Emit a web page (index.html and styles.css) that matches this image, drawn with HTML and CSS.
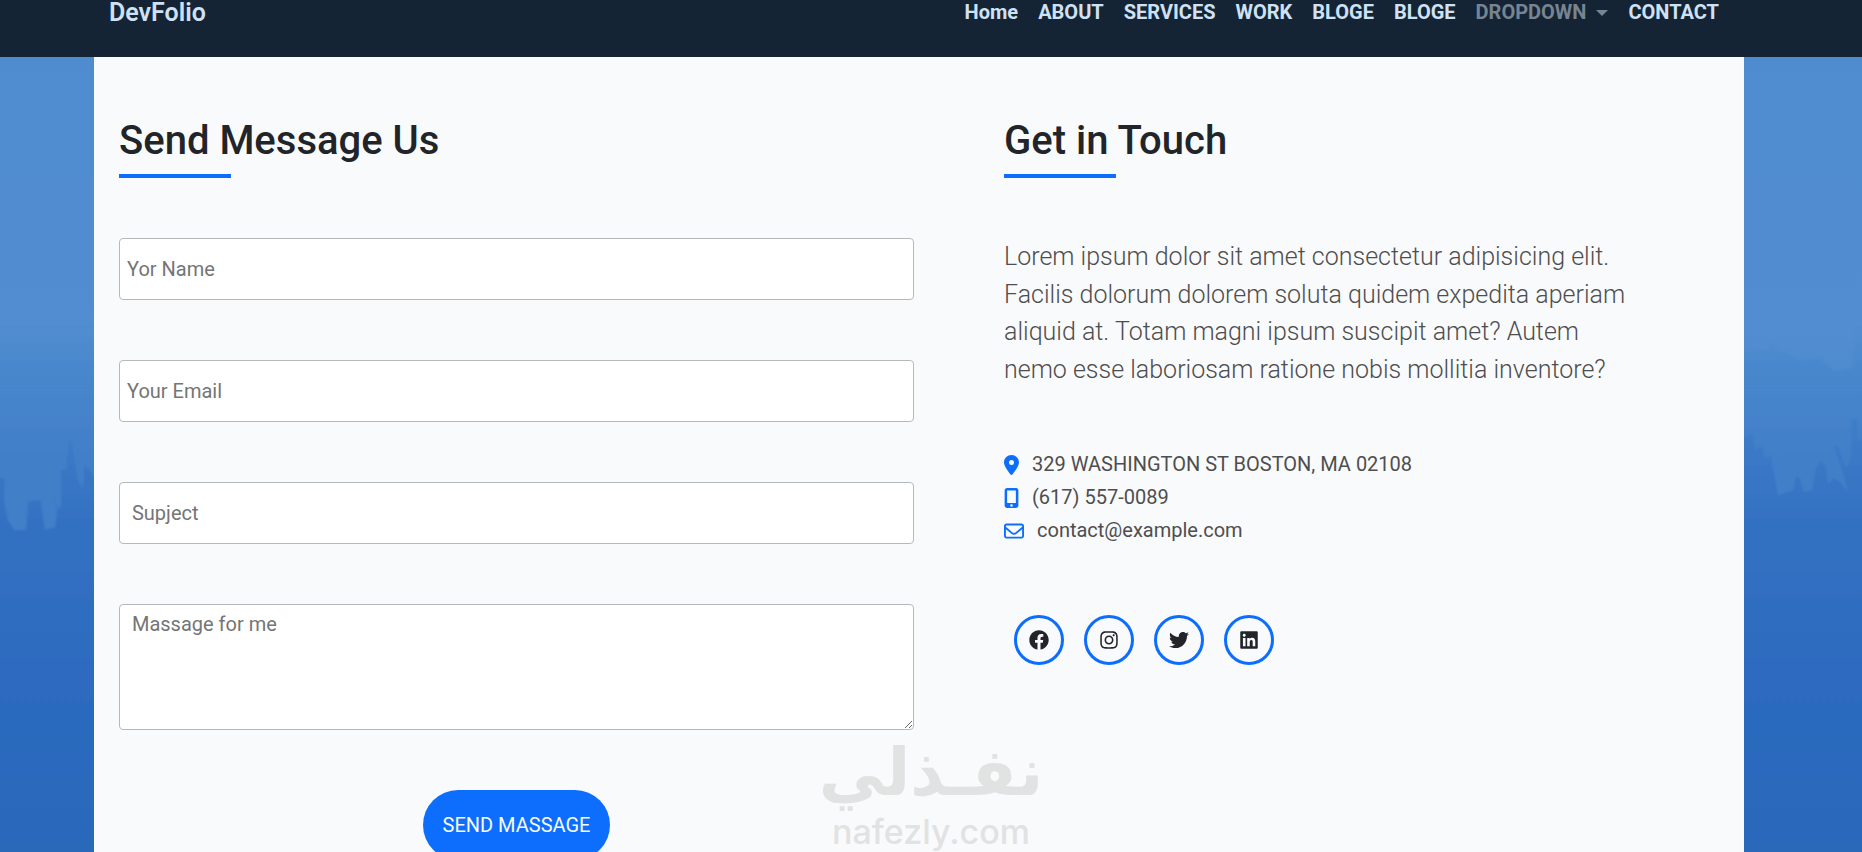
FILE: index.html
```html
<!DOCTYPE html>
<html lang="en">
<head>
<meta charset="utf-8">
<meta name="viewport" content="width=device-width, initial-scale=1">
<title>DevFolio</title>
<link rel="stylesheet" href="styles.css">
</head>
<body>
<header class="navbar">
  <a class="brand" href="#">DevFolio</a>
  <nav class="nav">
    <a href="#home">Home</a>
    <a href="#about">ABOUT</a>
    <a href="#services">SERVICES</a>
    <a href="#work">WORK</a>
    <a href="#bloge">BLOGE</a>
    <a href="#bloge">BLOGE</a>
    <a class="dropdown" href="#more">DROPDOWN</a>
    <a href="#contact">CONTACT</a>
  </nav>
</header>
<main class="contact">
  <svg class="scenery" viewBox="0 0 1862 795" preserveAspectRatio="none" aria-hidden="true">
    <defs>
      <linearGradient id="fog" gradientUnits="userSpaceOnUse" x1="0" y1="270" x2="0" y2="400">
        <stop offset="0" stop-color="#4685cb" stop-opacity="0"/>
        <stop offset=".5" stop-color="#4685cb"/>
        <stop offset="1" stop-color="#427fc9"/>
      </linearGradient>
      <linearGradient id="wood" gradientUnits="userSpaceOnUse" x1="0" y1="370" x2="0" y2="795">
        <stop offset="0" stop-color="#3e7cc7"/>
        <stop offset=".25" stop-color="#3270c2"/>
        <stop offset=".6" stop-color="#2d6bbf"/>
        <stop offset="1" stop-color="#2b68ba"/>
      </linearGradient>
      <filter id="soft"><feGaussianBlur stdDeviation="1"/></filter>
    </defs>
    <g filter="url(#soft)">
      <path fill="url(#fog)" d="M-9 250H120V500H-9zM1730 296l40-3 3-8 4 8 23 10 20-2 15 14 17-4 4-43 6-9 9 0V500H1730z"/>
      <path fill="url(#wood)" d="M-9 421H5L4 443 8 463 14 473 26 473 28 445 35 443 41 444 45 473 55 470 57 455 52 435 58 453 61 448 61 411 66 413 69 383 72 386 78 423 83 433 84 408 90 413 100 430V810H-9zM1735 383l18-6 3 16 6-5 3 13 6-2 7 39 4-1 11-4 3-14 4 2 4 14 8-2 4-22 5-8 5 6 2 18 6-6 6 4 8 10-6-22-8-23 4-1 8 22 5-10 1-38 4-2 2 22 14-4V810H1735z"/>
    </g>
  </svg>
  <section class="card">
    <form class="form">
      <h2 class="title">Send Message Us</h2>
      <input class="field" type="text" aria-label="Name" placeholder="Yor Name">
      <input class="field" type="email" aria-label="Email" placeholder="Your Email">
      <input class="field" type="text" aria-label="Subject" placeholder="&nbsp;Supject">
      <textarea class="field area" aria-label="Message" placeholder="&nbsp;Massage for me"></textarea>
      <button class="send" type="button">SEND MASSAGE</button>
    </form>
    <div class="info">
      <h2 class="title">Get in Touch</h2>
      <p class="lead">Lorem ipsum dolor sit amet consectetur adipisicing elit. Facilis dolorum dolorem soluta quidem expedita aperiam aliquid at. Totam magni ipsum suscipit amet? Autem nemo esse laboriosam ratione nobis mollitia inventore?</p>
      <ul class="details">
        <li><svg width="15" height="20" viewBox="0 0 384 512" aria-hidden="true"><path d="M215.700 499.200C267 435 384 279.400 384 192C384 86 298 0 192 0S0 86 0 192c0 87.400 117 243 168.300 307.200c12.300 15.300 35.100 15.300 47.400 0zM192 256a64 64 0 1 1 0-128 64 64 0 1 1 0 128z"/></svg>329 WASHINGTON ST BOSTON, MA 02108</li>
        <li><svg width="15" height="20" viewBox="0 0 384 512" aria-hidden="true"><path d="M16 64C16 28.700 44.700 0 80 0H304c35.300 0 64 28.700 64 64V448c0 35.300-28.700 64-64 64H80c-35.300 0-64-28.700-64-64V64zM224 448a32 32 0 1 0-64 0 32 32 0 1 0 64 0zM304 64H80V384H304V64z"/></svg>(617) 557-0089</li>
        <li><svg width="20" height="20" viewBox="0 0 512 512" aria-hidden="true"><path d="M64 112c-8.800 0-16 7.200-16 16v22.100L220.500 291.700c20.700 17 50.400 17 71.100 0L464 150.100V128c0-8.800-7.200-16-16-16H64zM48 212.200V384c0 8.800 7.200 16 16 16H448c8.800 0 16-7.200 16-16V212.200L322 328.800c-38.400 31.500-93.700 31.500-132 0L48 212.200zM0 128C0 92.700 28.700 64 64 64H448c35.300 0 64 28.700 64 64V384c0 35.300-28.700 64-64 64H64c-35.300 0-64-28.700-64-64V128z"/></svg>contact@example.com</li>
      </ul>
      <div class="social">
        <a href="#facebook" aria-label="Facebook"><svg width="20" height="20" viewBox="0 0 512 512"><path d="M504 256C504 119 393 8 256 8S8 119 8 256c0 123.780 90.690 226.380 209.250 245V327.690h-63V256h63v-54.640c0-62.150 37-96.480 93.670-96.480 27.140 0 55.520 4.840 55.520 4.840v61h-31.280c-30.800 0-40.410 19.120-40.410 38.730V256h68.780l-11 71.690h-57.780V501C413.310 482.380 504 379.780 504 256z"/></svg></a>
        <a href="#instagram" aria-label="Instagram"><svg width="18" height="20" viewBox="0 0 448 512"><path d="M224.100 141c-63.600 0-114.900 51.300-114.900 114.900s51.300 114.900 114.900 114.900S339 319.500 339 255.900 287.700 141 224.100 141zm0 189.600c-41.100 0-74.700-33.500-74.700-74.700s33.500-74.700 74.700-74.700 74.700 33.500 74.700 74.700-33.600 74.700-74.700 74.700zm146.400-194.300c0 14.900-12 26.800-26.800 26.800-14.900 0-26.800-12-26.800-26.800s12-26.800 26.800-26.800 26.800 12 26.800 26.800zm76.100 27.200c-1.700-35.900-9.900-67.700-36.200-93.900-26.200-26.200-58-34.400-93.900-36.200-37-2.100-147.900-2.100-184.900 0-35.800 1.700-67.600 9.900-93.900 36.100s-34.400 58-36.200 93.900c-2.100 37-2.100 147.900 0 184.900 1.700 35.900 9.900 67.700 36.200 93.900s58 34.400 93.900 36.200c37 2.100 147.900 2.100 184.900 0 35.900-1.700 67.700-9.900 93.900-36.200 26.200-26.200 34.400-58 36.200-93.900 2.100-37 2.100-147.800 0-184.800zM398.800 388c-7.800 19.600-22.900 34.700-42.600 42.600-29.500 11.700-99.500 9-132.100 9s-102.700 2.600-132.100-9c-19.600-7.800-34.700-22.900-42.600-42.600-11.700-29.500-9-99.500-9-132.100s-2.600-102.700 9-132.100c7.800-19.600 22.900-34.700 42.600-42.600 29.500-11.700 99.500-9 132.100-9s102.700-2.600 132.100 9c19.600 7.800 34.700 22.900 42.600 42.600 11.700 29.500 9 99.500 9 132.100s2.700 102.700-9 132.100z"/></svg></a>
        <a href="#twitter" aria-label="Twitter"><svg width="20" height="20" viewBox="0 0 512 512"><path d="M459.370 151.716c.325 4.548.325 9.097.325 13.645 0 138.720-105.583 298.558-298.558 298.558-59.452 0-114.680-17.219-161.137-47.106 8.447.974 16.568 1.299 25.340 1.299 49.055 0 94.213-16.568 130.274-44.832-46.132-.975-84.792-31.188-98.112-72.772 6.498.974 12.995 1.624 19.818 1.624 9.421 0 18.843-1.300 27.614-3.573-48.081-9.747-84.143-51.980-84.143-102.985v-1.299c13.969 7.797 30.214 12.670 47.431 13.319-28.264-18.843-46.781-51.005-46.781-87.391 0-19.492 5.197-37.360 14.294-52.954 51.655 63.675 129.300 105.258 216.365 109.807-1.624-7.797-2.599-15.918-2.599-24.040 0-57.828 46.782-104.934 104.934-104.934 30.213 0 57.502 12.670 76.670 33.137 23.715-4.548 46.456-13.320 66.599-25.340-7.798 24.366-24.366 44.833-46.132 57.827 21.117-2.273 41.584-8.122 60.426-16.243-14.292 20.791-32.161 39.308-52.628 54.253z"/></svg></a>
        <a href="#linkedin" aria-label="LinkedIn"><svg width="18" height="20" viewBox="0 0 448 512"><path d="M416 32H31.900C14.300 32 0 46.500 0 64.300v383.400C0 465.500 14.300 480 31.900 480H416c17.600 0 32-14.500 32-32.300V64.300c0-17.800-14.400-32.300-32-32.300zM135.400 416H69V202.200h66.500V416zm-33.200-243c-21.300 0-38.500-17.300-38.500-38.500S80.900 96 102.200 96c21.200 0 38.500 17.300 38.500 38.500 0 21.300-17.200 38.500-38.500 38.500zm282.100 243h-66.400V312c0-24.800-.5-56.700-34.500-56.700-34.600 0-39.900 27-39.900 54.900V416h-66.400V202.200h63.700v29.200h.9c8.900-16.800 30.600-34.500 62.900-34.500 67.200 0 79.700 44.300 79.700 101.900V416z"/></svg></a>
      </div>
    </div>
  </section>
</main>
<div class="watermark" aria-hidden="true">
  <span class="mark-ar" lang="ar" dir="rtl">نفـذلي</span>
  <span class="mark-en">nafezly.com</span>
</div>
</body>
</html>
```
FILE: styles.css
```css
* {
  box-sizing: border-box;
}

body {
  margin: 0;
  height: 100vh;
  overflow: hidden;
  display: flex;
  flex-direction: column;
  position: relative;
  font-family: Roboto, "Liberation Sans", sans-serif;
  font-size: 20px;
  line-height: 30px;
  color: #212529;
}

a {
  color: inherit;
  text-decoration: none;
}

.navbar {
  flex: none;
  display: flex;
  justify-content: space-between;
  align-items: center;
  padding: 0 143px 32px 109px;
  background: #152434;
  color: #cfe2f5;
  line-height: 25px;
}

.brand {
  font-size: 25px;
  font-weight: 600;
}

.nav {
  display: flex;
  gap: 20px;
  font-weight: 700;
}

.dropdown {
  display: flex;
  align-items: center;
  gap: 10px;
  color: #778492;
}

.dropdown::after {
  content: "";
  border: 6px solid transparent;
  border-top-color: currentColor;
  border-bottom: 0;
}

.contact {
  flex: 1;
  min-height: 0;
  position: relative;
  padding: 0 118px 0 94px;
  background: linear-gradient(#4f8ccf, #518dd0 35%, #4686cc 50%);
}

.scenery {
  position: absolute;
  inset: 0;
  width: 100%;
  height: 100%;
}

.card {
  position: relative;
  display: grid;
  grid-template-columns: 795fr 715fr;
  gap: 90px;
  min-height: 100%;
  padding: 60px 25px;
  background: #f9fafc;
}

.form {
  display: flex;
  flex-direction: column;
  gap: 60px;
}

.title {
  margin: 0;
  font-size: 40px;
  font-weight: 500;
  line-height: 48px;
}

.title::after {
  content: "";
  display: block;
  width: 112px;
  height: 4px;
  margin-top: 9px;
  background: #0d6efd;
}

.field {
  width: 100%;
  height: 62px;
  padding: 4px 7px;
  border: 1px solid #b5b9be;
  border-radius: 4px;
  background: #fff;
  font: inherit;
  color: inherit;
}

.field::placeholder {
  color: #757575;
  opacity: 1;
}

.area {
  display: block;
  height: 126px;
  resize: vertical;
}

.send {
  align-self: center;
  height: 70px;
  padding: 0 20px;
  border: 0;
  border-radius: 35px;
  background: #0d6efd;
  color: #f8f9fa;
  font: inherit;
}

.lead {
  margin: 60px 80px 0 0;
  font-size: 25px;
  font-weight: 300;
  line-height: 1.5;
  color: #4e4e4e;
}

.details {
  margin: 60px 0 0;
  padding: 0;
  list-style: none;
  line-height: 33px;
  color: #4e4e4e;
}

.details li {
  display: flex;
  align-items: center;
  gap: 13px;
}

.details svg {
  fill: #0d6efd;
}

.social {
  display: flex;
  gap: 20px;
  margin: 68px 10px 0;
}

.social a {
  display: flex;
  align-items: center;
  justify-content: center;
  width: 50px;
  height: 50px;
  border: 3px solid #0d6efd;
  border-radius: 50%;
}

.social svg {
  fill: #212529;
}

.watermark {
  position: absolute;
  left: 50%;
  bottom: 0;
  display: flex;
  flex-direction: column;
  align-items: center;
  transform: translateX(-50%);
  color: #e1e2e2;
  pointer-events: none;
}

.mark-ar {
  font-family: "DejaVu Sans", sans-serif;
  font-size: 66px;
  font-weight: 700;
  line-height: 77px;
}

.mark-en {
  font-family: Inter, sans-serif;
  font-size: 34px;
  font-weight: 500;
  line-height: 41px;
}
```
